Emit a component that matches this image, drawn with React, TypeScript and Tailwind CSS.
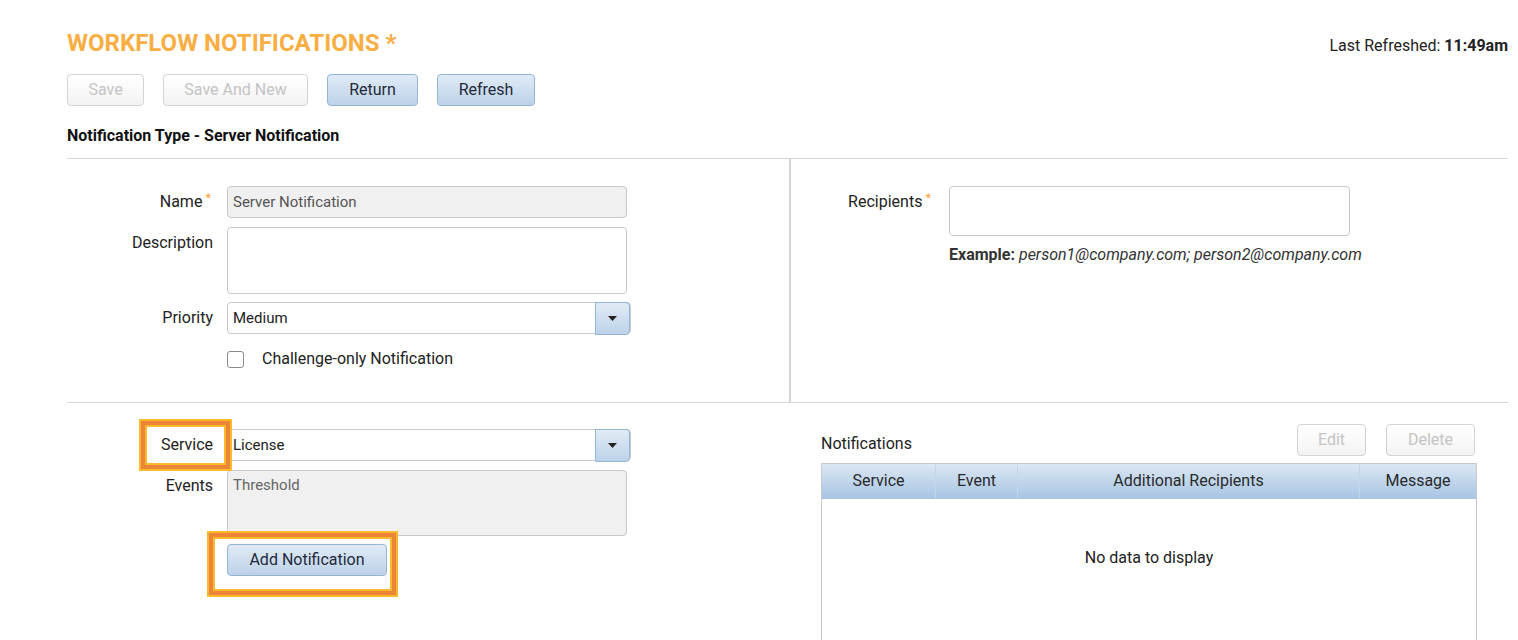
import React from "react";

const font = { fontFamily: "Roboto, 'Liberation Sans', sans-serif" };

function Btn({ label, disabled, className = "" }: { label: string; disabled?: boolean; className?: string }) {
  return (
    <button
      className={
        "h-[32px] rounded-[4px] border text-[16px] leading-none " +
        (disabled
          ? "border-[#d4d4d4] bg-gradient-to-b from-white to-[#f3f3f3] text-[#c4c4c4] "
          : "border-[#94b4d6] bg-gradient-to-b from-[#e1ebf6] to-[#bcd2e9] text-[#1f2a3a] ") +
        className
      }
    >
      {label}
    </button>
  );
}

function Caret() {
  return (
    <div className="-my-px flex h-[33px] w-[35px] items-center justify-center rounded-r-[4px] border border-[#94b4d6] bg-gradient-to-b from-[#e1ebf6] to-[#bcd2e9]">
      <svg width="9" height="5" viewBox="0 0 9 5">
        <path d="M0 0h9L4.5 5z" fill="#222" />
      </svg>
    </div>
  );
}

function Select({ value }: { value: string }) {
  return (
    <div className="flex h-[32px] w-[404px] items-center rounded-[4px] border border-[#c9c9c9] bg-white">
      <div className="flex-1 pl-[5px] text-[15px] text-[#222]">{value}</div>
      <Caret />
    </div>
  );
}

function Req() {
  return <span className="relative -top-[5px] ml-[3px] text-[13px] text-[#f4a33c]">*</span>;
}

// orange/yellow annotation frame drawn over the form
function Highlight({ className }: { className: string }) {
  return (
    <div className={"pointer-events-none absolute border-2 border-[#fbba2c] " + className}>
      <div className="h-full w-full border-[4px] border-[#ec8538]">
        <div className="h-full w-full border-2 border-[#fbba2c]" />
      </div>
    </div>
  );
}

export default function App() {
  return (
    <div style={font} className="min-h-[640px] w-[1518px] overflow-hidden bg-white pl-[67px] pr-[10px] text-[#222]">
      <div className="flex items-start justify-between pt-[28px]">
        <h1 className="text-[24px] font-bold leading-[30px] text-[#f8ae43]">WORKFLOW NOTIFICATIONS *</h1>
        <div className="pt-[8px] text-[16px] leading-[20px] text-[#222]">
          Last Refreshed: <span className="font-bold">11:49am</span>
        </div>
      </div>

      <div className="mt-[16px] flex gap-[19px]">
        <Btn label="Save" disabled className="w-[77px]" />
        <Btn label="Save And New" disabled className="w-[145px]" />
        <Btn label="Return" className="w-[91px]" />
        <Btn label="Refresh" className="w-[98px]" />
      </div>

      <div className="mt-[20px] text-[16px] font-bold leading-[20px] text-[#111]">Notification Type - Server Notification</div>

      <div className="mt-[12px] grid grid-cols-[722px_1fr] border-b border-t border-[#d6d6d6]">
        <div className="h-[243px] pt-[27px]">
          <div className="flex items-center">
            <div className="w-[146px] pr-[2px] text-right text-[16px]">
              Name
              <Req />
            </div>
            <div className="ml-[14px] flex h-[32px] w-[400px] items-center rounded-[4px] border border-[#c9c9c9] bg-[#f0f0f0] pl-[5px] text-[15px] text-[#555]">
              Server Notification
            </div>
          </div>
          <div className="mt-[9px] flex items-start">
            <div className="w-[146px] pt-[4px] text-right text-[16px]">Description</div>
            <div className="ml-[14px] h-[67px] w-[400px] rounded-[4px] border border-[#c9c9c9] bg-white" />
          </div>
          <div className="mt-[8px] flex items-center">
            <div className="w-[146px] text-right text-[16px]">Priority</div>
            <div className="ml-[14px]">
              <Select value="Medium" />
            </div>
          </div>
          <div className="ml-[160px] mt-[13px] flex items-center">
            <div className="h-[17px] w-[17px] rounded-[3px] border border-[#8a8a8a] bg-white" />
            <span className="ml-[18px] text-[16px]">Challenge-only Notification</span>
          </div>
        </div>
        <div className="border-l-2 border-[#d6d6d6] pt-[27px]">
          <div className="flex items-start">
            <div className="w-[140px] pt-[4px] text-right text-[16px]">
              Recipients
              <Req />
            </div>
            <div className="ml-[18px]">
              <div className="h-[50px] w-[401px] rounded-[4px] border border-[#c9c9c9] bg-white" />
              <div className="mt-[7px] text-[16px] text-[#333]">
                <span className="font-bold">Example:</span> <i>person1@company.com; person2@company.com</i>
              </div>
            </div>
          </div>
        </div>
      </div>

      <div className="flex pt-[26px]">
        <div className="relative w-[754px]">
          <div className="flex items-center">
            <div className="w-[146px] text-right text-[16px]">Service</div>
            <div className="ml-[14px]">
              <Select value="License" />
            </div>
          </div>
          <div className="mt-[9px] flex items-start">
            <div className="w-[146px] pt-[4px] text-right text-[16px]">Events</div>
            <div className="ml-[14px] h-[66px] w-[400px] rounded-[4px] border border-[#c9c9c9] bg-[#f0f0f0] pl-[5px] pt-[3px] text-[15px] text-[#666]">
              Threshold
            </div>
          </div>
          <div className="ml-[160px] mt-[8px]">
            <Btn label="Add Notification" className="w-[160px]" />
          </div>
          <Highlight className="-top-[10px] left-[72px] h-[52px] w-[93px]" />
          <Highlight className="left-[140px] top-[102px] h-[66px] w-[191px]" />
        </div>

        <div className="w-[656px]">
          <div className="flex items-start justify-between">
            <div className="mt-[5px] text-[16px] leading-[20px]">Notifications</div>
            <div className="-mt-[5px] flex gap-[20px] pr-[2px]">
              <Btn label="Edit" disabled className="w-[69px]" />
              <Btn label="Delete" disabled className="w-[89px]" />
            </div>
          </div>
          <div className="mt-[7px] h-[200px] border border-[#c9c9c9]">
            <div className="flex h-[35px] border-b border-[#a8c3e0] bg-gradient-to-b from-[#dbe7f3] to-[#a8c5e4] text-[16px] text-[#2a2a2a]">
              <div className="flex w-[114px] items-center justify-center border-r border-[#c3d5e9]">Service</div>
              <div className="flex w-[82px] items-center justify-center border-r border-[#c3d5e9]">Event</div>
              <div className="flex w-[342px] items-center justify-center border-r border-[#c3d5e9]">Additional Recipients</div>
              <div className="flex flex-1 items-center justify-center">Message</div>
            </div>
            <div className="pt-[47px] text-center text-[16px]">No data to display</div>
          </div>
        </div>
      </div>
    </div>
  );
}
